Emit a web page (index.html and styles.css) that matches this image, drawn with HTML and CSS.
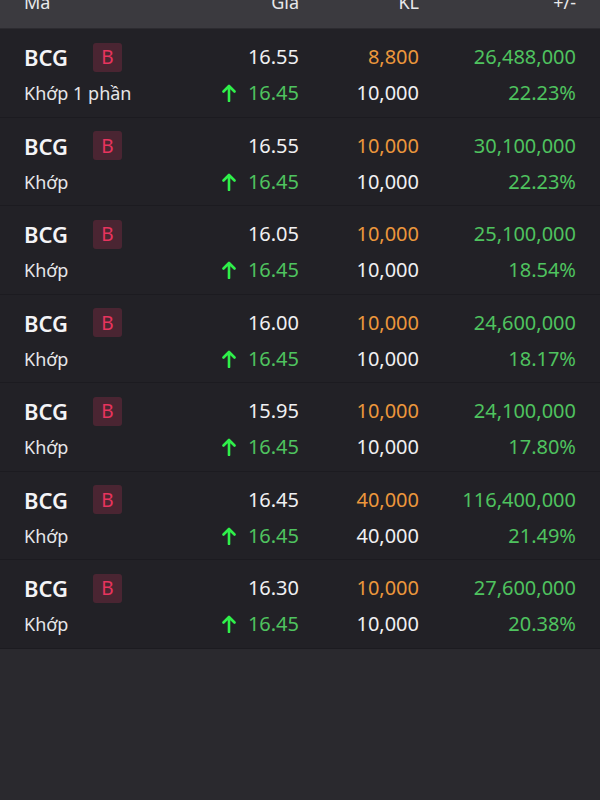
FILE: index.html
```html
<!DOCTYPE html>
<html lang="vi">
<head>
<meta charset="utf-8">
<link rel="stylesheet" href="styles.css">
</head>
<body>
<div class="table">
  <div class="head">
    <div class="hc left">Mã</div>
    <div class="hc">Giá</div>
    <div class="hc">KL</div>
    <div class="hc">+/-</div>
  </div>

  <div class="row">
    <div class="c left"><span class="tick">BCG</span><span class="badge">B</span></div>
    <div class="c white">16.55</div>
    <div class="c orange">8,800</div>
    <div class="c green">26,488,000</div>
    <div class="c left sub">Khớp 1 phần</div>
    <div class="c green"><svg class="arr" viewBox="0 0 14 18"><path d="M7 17V2M1.5 7.5L7 2l5.5 5.5" fill="none" stroke="#2ff04a" stroke-width="2.6" stroke-linecap="round" stroke-linejoin="round"/></svg>16.45</div>
    <div class="c white">10,000</div>
    <div class="c green">22.23%</div>
  </div>

  <div class="row">
    <div class="c left"><span class="tick">BCG</span><span class="badge">B</span></div>
    <div class="c white">16.55</div>
    <div class="c orange">10,000</div>
    <div class="c green">30,100,000</div>
    <div class="c left sub">Khớp</div>
    <div class="c green"><svg class="arr" viewBox="0 0 14 18"><path d="M7 17V2M1.5 7.5L7 2l5.5 5.5" fill="none" stroke="#2ff04a" stroke-width="2.6" stroke-linecap="round" stroke-linejoin="round"/></svg>16.45</div>
    <div class="c white">10,000</div>
    <div class="c green">22.23%</div>
  </div>

  <div class="row">
    <div class="c left"><span class="tick">BCG</span><span class="badge">B</span></div>
    <div class="c white">16.05</div>
    <div class="c orange">10,000</div>
    <div class="c green">25,100,000</div>
    <div class="c left sub">Khớp</div>
    <div class="c green"><svg class="arr" viewBox="0 0 14 18"><path d="M7 17V2M1.5 7.5L7 2l5.5 5.5" fill="none" stroke="#2ff04a" stroke-width="2.6" stroke-linecap="round" stroke-linejoin="round"/></svg>16.45</div>
    <div class="c white">10,000</div>
    <div class="c green">18.54%</div>
  </div>

  <div class="row">
    <div class="c left"><span class="tick">BCG</span><span class="badge">B</span></div>
    <div class="c white">16.00</div>
    <div class="c orange">10,000</div>
    <div class="c green">24,600,000</div>
    <div class="c left sub">Khớp</div>
    <div class="c green"><svg class="arr" viewBox="0 0 14 18"><path d="M7 17V2M1.5 7.5L7 2l5.5 5.5" fill="none" stroke="#2ff04a" stroke-width="2.6" stroke-linecap="round" stroke-linejoin="round"/></svg>16.45</div>
    <div class="c white">10,000</div>
    <div class="c green">18.17%</div>
  </div>

  <div class="row">
    <div class="c left"><span class="tick">BCG</span><span class="badge">B</span></div>
    <div class="c white">15.95</div>
    <div class="c orange">10,000</div>
    <div class="c green">24,100,000</div>
    <div class="c left sub">Khớp</div>
    <div class="c green"><svg class="arr" viewBox="0 0 14 18"><path d="M7 17V2M1.5 7.5L7 2l5.5 5.5" fill="none" stroke="#2ff04a" stroke-width="2.6" stroke-linecap="round" stroke-linejoin="round"/></svg>16.45</div>
    <div class="c white">10,000</div>
    <div class="c green">17.80%</div>
  </div>

  <div class="row">
    <div class="c left"><span class="tick">BCG</span><span class="badge">B</span></div>
    <div class="c white">16.45</div>
    <div class="c orange">40,000</div>
    <div class="c green">116,400,000</div>
    <div class="c left sub">Khớp</div>
    <div class="c green"><svg class="arr" viewBox="0 0 14 18"><path d="M7 17V2M1.5 7.5L7 2l5.5 5.5" fill="none" stroke="#2ff04a" stroke-width="2.6" stroke-linecap="round" stroke-linejoin="round"/></svg>16.45</div>
    <div class="c white">40,000</div>
    <div class="c green">21.49%</div>
  </div>

  <div class="row">
    <div class="c left"><span class="tick">BCG</span><span class="badge">B</span></div>
    <div class="c white">16.30</div>
    <div class="c orange">10,000</div>
    <div class="c green">27,600,000</div>
    <div class="c left sub">Khớp</div>
    <div class="c green"><svg class="arr" viewBox="0 0 14 18"><path d="M7 17V2M1.5 7.5L7 2l5.5 5.5" fill="none" stroke="#2ff04a" stroke-width="2.6" stroke-linecap="round" stroke-linejoin="round"/></svg>16.45</div>
    <div class="c white">10,000</div>
    <div class="c green">20.38%</div>
  </div>
</div>
</body>
</html>
```

FILE: styles.css
```css
html, body {
  margin: 0;
  padding: 0;
  background: #2a292e;
  font-family: "Noto Sans", "Open Sans", sans-serif;
  color: #f0f0f2;
}
.table {
  width: 600px;
}
.head {
  height: 29px;
  background: #3b3a3f;
  display: grid;
  grid-template-columns: 175px 100px 120px 157px;
  padding: 0 24px;
  overflow: hidden;
  border-bottom: 1px solid #2c2b30;
  box-sizing: border-box;
}
.hc {
  font-size: 18px;
  line-height: 20px;
  margin-top: -8px;
  text-align: right;
  color: #e8e8ea;
}
.left { text-align: left; justify-content: flex-start; }
.row {
  height: 88.5px;
  box-sizing: border-box;
  background: #222126;
  border-bottom: 1px solid #1c1b20;
  display: grid;
  grid-template-columns: 175px 100px 120px 157px;
  grid-template-rows: 28px 28px;
  row-gap: 8px;
  padding: 14px 24px 0;
}
.c {
  display: flex;
  align-items: center;
  justify-content: flex-end;
  font-size: 20px;
  line-height: 28px;
  white-space: nowrap;
}
.c.left { justify-content: flex-start; }
.tick {
  font-size: 22px;
  font-weight: 600;
  color: #f4f4f6;
  width: 69px;
}
.badge {
  width: 29px;
  height: 29px;
  border-radius: 3px;
  background: #4a2532;
  color: #e8345e;
  font-size: 19px;
  display: flex;
  align-items: center;
  justify-content: center;
}
.sub {
  font-size: 18px;
  color: #e6e6e8;
}
.white { color: #f0f0f2; }
.orange { color: #ec973c; }
.green { color: #4fc35f; }
.arr {
  width: 14px;
  height: 18px;
  margin-right: 12px;
}
```
